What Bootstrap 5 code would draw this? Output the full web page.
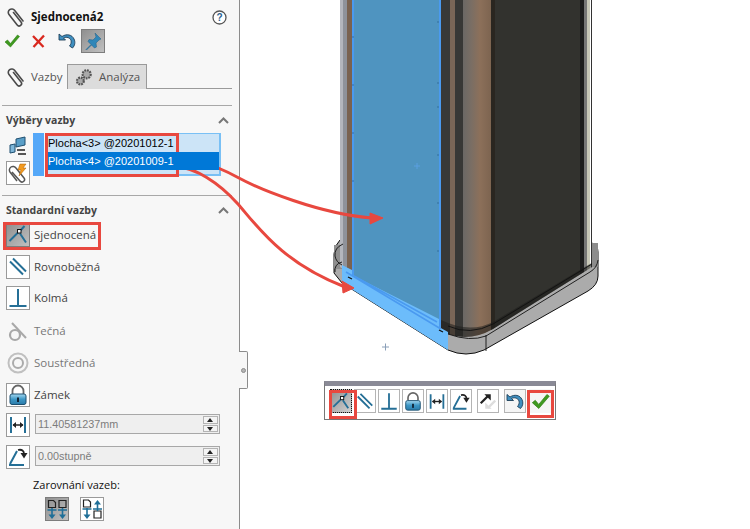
<!DOCTYPE html>
<html lang="cs">
<head>
    <meta charset="UTF-8">
    <meta name="viewport" content="width=device-width, initial-scale=1.0">
    <title>Sjednocená2</title>
    <link rel="stylesheet" href="https://cdn.jsdelivr.net/npm/bootstrap@5.3.1/dist/css/bootstrap.min.css">
    <script src="https://cdn.jsdelivr.net/npm/bootstrap@5.3.1/dist/js/bootstrap.bundle.min.js"></script>
    <style>
        html, body { height: 529px; overflow: hidden; background: #fff; }
        body { font-family: "Open Sans", "Noto Sans", sans-serif; font-size: 11px; color: #333; line-height: 1; }
        .page { position: relative; width: 750px; height: 529px; }
        .side { width: 240px; height: 529px; background: #f7f7f7; border-right: 1px solid #8c8c8c; flex: none; }
        .stage { display: block; width: 510px; height: 529px; }
        .ink { position: absolute; left: 0; top: 0; pointer-events: none; }

        .head { height: 29px; padding: 5px 12px 0 7px; }
        .head-title { font-size: 11.5px; font-weight: 700; color: #111; margin-left: 6px; }
        .acts { height: 24px; padding-left: 3px; margin-bottom: 11px; }
        .act { width: 18px; height: 18px; margin-right: 9px; }
        .tool { width: 24px; height: 24px; padding: 0; border: 1px solid #9a9a9a; background: #fff; border-radius: 0; display: flex; align-items: center; justify-content: center; flex: none; }
        .tool svg { width: 22px; height: 22px; }
        .tool.on { background: linear-gradient(135deg, #8f8f8f, #c0c0c0); border-color: #7d7d7d; }

        .tabs-row { height: 25px; margin-right: 7px; border-bottom: 1px solid #9a9a9a; flex-wrap: nowrap; }
        .tabs-row .nav-link { height: 25px; padding: 0 6px 0 7px; border: 0; border-radius: 0; color: #555; font-size: 11.5px; display: flex; align-items: center; gap: 6px; }
        .tabs-row .tab-a { width: 67px; background: #f7f7f7; }
        .tabs-row .tab-b { width: 80px; background: #dcdcdc; border: 1px solid #9a9a9a; border-bottom: 0; }
        .tab-ico { width: 18px; height: 20px; flex: none; }

        .sect { margin: 16px 7px 0 2px; border-top: 1px solid #a8a8a8; }
        .sect-head { height: 27px; padding: 2px 3px 0 4px; font-size: 10.5px; font-weight: 700; color: #444; }
        .chev { width: 11px; height: 7px; }

        .pick { height: 62px; padding-left: 6px; }
        .pick-ico { width: 24px; padding-top: 3px; }
        .swatch { width: 11px; height: 43px; margin: 0 3px 0 3px; background: #55a8f8; }
        .pick-list { width: 174px; height: 43px; padding: 0; background: #cce4f7; border-style: solid; border-color: #79c0f5; border-width: 1px 2px 2px 1px; border-radius: 0; }
        .pick-list .list-group-item { height: 18px; padding: 0; background: transparent; border: 0; border-radius: 0; color: #000; font-family: "Liberation Sans", sans-serif; font-size: 11px; display: flex; align-items: center; }
        .pick-list .list-group-item.active { background: #0078d7; color: #fff; margin-top: 0; }

        .rel-row { padding-left: 6px; gap: 4px; font-size: 11.5px; color: #444; }
        .rel-row.off { color: #777; }
        .off-ico { width: 24px; height: 24px; flex: none; }
        .gap-8 { margin-bottom: 8px; }
        .gap-7 { margin-bottom: 7px; }
        .gap-6 { margin-bottom: 6px; }
        .gap-9 { margin-bottom: 9px; }

        .num { width: 185px; height: 20px; margin: 0 0 2px 1px; position: relative; }
        .num .form-control { height: 20px; padding: 0 2px; font-family: "Liberation Sans", sans-serif; font-size: 10.8px; color: #7c7c7c; background: #efefef; border: 1px solid #a8a8a8; border-radius: 0; }
        .spin { position: absolute; right: 2px; top: 2px; width: 15px; height: 16px; display: flex; flex-direction: column; gap: 1px; }
        .spin span { flex: 1; background: #f4f4f4; border: 1px solid #b4b4b4; position: relative; }
        .spin span::after { content: ""; position: absolute; left: 3px; top: 1px; border-left: 3px solid transparent; border-right: 3px solid transparent; }
        .spin .up::after { border-bottom: 4px solid #222; }
        .spin .dn::after { border-top: 4px solid #222; }

        .align-label { margin: 10px 0 7px 33px; color: #111; }
        .align-btns { padding-left: 45px; gap: 11px; }

        .grip { position: absolute; left: 239px; top: 351px; width: 9px; height: 38px; background: #f7f7f7; border: 1px solid #8c8c8c; border-left: 0; border-radius: 0 2px 2px 0; display: flex; align-items: center; justify-content: center; }
        .grip i { width: 5px; height: 5px; border-radius: 50%; background: #b5b5b5; border: 1px solid #8c8c8c; }

        .float-bar { position: absolute; left: 324px; top: 381px; width: 232px; height: 39px; background: #fff; border: 1px solid #777; border-top: 5px solid #8a8a96; padding: 3px 0 0 5px; gap: 2px; }
        .float-bar .tool { width: 22px; height: 24px; background: #fff; border: 1px solid #b4b4b4; }
        .float-bar .tool.on { background: linear-gradient(135deg, #8f8f8f, #d0d0d0); border: 1px dotted #111; }
        .float-bar .tool svg { width: 21px; height: 21px; }
        .float-bar .plain { background: #f5f5f5; }
        .float-bar .sep { margin-left: 3px; }
        .float-bar .bare { border: 0; background: #f5f5f5; margin-left: 1px; }
    </style>
</head>
<body>

<svg width="0" height="0" class="position-absolute">
    <defs>
        <linearGradient id="bronze" x1="0" x2="1" y1="0" y2="0"><stop offset="0" stop-color="#6b6865"/><stop offset=".3" stop-color="#7a6e64"/><stop offset=".6" stop-color="#8c705a"/><stop offset="1" stop-color="#7d6450"/></linearGradient>
        <linearGradient id="lockBlue" x1="0" x2="0" y1="0" y2="1"><stop offset="0" stop-color="#a5d8f0"/><stop offset=".5" stop-color="#3d97c6"/><stop offset="1" stop-color="#2a7aa8"/></linearGradient>
    </defs>
    <symbol id="i-clip" viewBox="0 0 18 20"><path d="M6.500 5.500L14 15a2.400 2.400 0 0 1-3.800 3L2 7.500A3.400 3.400 0 0 1 7.500 3.300L16 14" fill="none" stroke="#4a4a4a" stroke-width="1.600" stroke-linecap="round"/></symbol>
    <symbol id="i-check" viewBox="0 0 18 18"><path d="M2 10l2.500-2 3 3.500L14.500 3 16.500 4.500 7.500 15z" fill="#3f9a1f" stroke="#2e7d14" stroke-width=".6"/></symbol>
    <symbol id="i-x" viewBox="0 0 18 18"><path d="M3 4l10.500 11M14 3.500L3.500 15" stroke="#d9281e" stroke-width="2.300" fill="none"/></symbol>
    <symbol id="i-undo" viewBox="0 0 20 20"><path d="M2 3v6h6.500L6.500 7c3-1.500 6.500-.5 7.500 2.500.6 2-.2 4-1.500 5.500l3 2c2.500-2.500 3-6 1.500-9C15 3.500 9.500 2.500 5 5.500z" fill="#3f8fc0" stroke="#1d3e58" stroke-width=".9"/></symbol>
    <symbol id="i-pin" viewBox="0 0 22 22"><path d="M13 3l6 6-2 1-3 3 .5 4-2 1-3-3-5 5-.5-.5 5-5-3-3 1-2 4 .5 3-3z" fill="#2f86b8" stroke="#1f5f86" stroke-width=".5"/></symbol>
    <symbol id="i-coinc" viewBox="0 0 22 22"><path d="M2.500 17L12 7.500M13 9.500l6 9M13 7l4.500-5" stroke="#256f96" stroke-width="2" fill="none"/><rect x="10.500" y="5.500" width="3.500" height="3.500" fill="#fff" stroke="#111"/></symbol>
    <symbol id="i-par" viewBox="0 0 22 22"><path d="M3 5.500l13 13M6 2.500l13 13" stroke="#256f96" stroke-width="2" fill="none"/></symbol>
    <symbol id="i-perp" viewBox="0 0 22 22"><path d="M2.500 19h17M11 2v17" stroke="#256f96" stroke-width="2" fill="none"/></symbol>
    <symbol id="i-tan" viewBox="0 0 24 24"><circle cx="9" cy="16" r="5" fill="none" stroke="#a8a8a8" stroke-width="2.200"/><path d="M6 4l14 15" stroke="#a8a8a8" stroke-width="2"/></symbol>
    <symbol id="i-conc" viewBox="0 0 24 24"><circle cx="12" cy="12" r="9.500" fill="none" stroke="#c0c0c0" stroke-width="2"/><circle cx="12" cy="12" r="5" fill="none" stroke="#ababab" stroke-width="2"/></symbol>
    <symbol id="i-lock" viewBox="0 0 22 22"><path d="M5.500 10V7a5.500 5.500 0 0 1 11 0V10" fill="none" stroke="#666" stroke-width="1.800"/><rect x="3" y="10" width="16" height="10.500" rx="2" fill="url(#lockBlue)" stroke="#1c4f70"/><rect x="10" y="13.500" width="2" height="4.500" fill="#123"/></symbol>
    <symbol id="i-dist" viewBox="0 0 22 22"><path d="M4 3v16M18 3v16" stroke="#256f96" stroke-width="2"/><path d="M6 11h10" stroke="#222" stroke-width="1.500"/><path d="M5.500 11l3.500-3v6zM16.500 11l-3.500-3v6z" fill="#222"/></symbol>
    <symbol id="i-ang" viewBox="0 0 22 22"><path d="M2 19h15M3 18L10 5" stroke="#256f96" stroke-width="2" fill="none"/><path d="M11 4c4-1 6 1 6 4" stroke="#222" stroke-width="1.800" fill="none"/><path d="M13.500 7h7l-3.500 5.500z" fill="#222"/></symbol>
    <symbol id="i-sym" viewBox="0 0 22 22"><path d="M3 13l8-8" stroke="#222" stroke-width="2.500"/><path d="M7 3h7v7z" fill="#222"/><path d="M19 10l-8 8" stroke="#ddd" stroke-width="2.500"/><path d="M8 12v7h7z" fill="#ddd"/></symbol>
    <symbol id="i-al1" viewBox="0 0 22 22"><path d="M2.500 2.500h5l2 2v5h-7zM13 2.500h7v7h-7z" fill="none" stroke="#222" stroke-width="1.200"/><path d="M6 10v7M16.500 10v7M1.500 12h9M12 12h9" stroke="#1f6f98" stroke-width="1.600"/><path d="M2.500 16.500h7L6 21zM13 16.500h7L16.500 21z" fill="#1f6f98"/></symbol>
    <symbol id="i-al2" viewBox="0 0 22 22"><path d="M2.500 2h5l2 2v5h-7zM13 13h7v7h-7z" fill="none" stroke="#222" stroke-width="1.200"/><path d="M6 10v7M16.500 6v7M1.500 11h9M12 11h9" stroke="#1f6f98" stroke-width="1.600"/><path d="M2.500 16.500h7L6 21zM13 6.500h7L16.500 2z" fill="#1f6f98"/></symbol>
    <symbol id="i-chev" viewBox="0 0 11 7"><path d="M1 6l4.500-4.500L10 6" fill="none" stroke="#777" stroke-width="2"/></symbol>
</svg>

<div class="page d-flex">
    <aside class="side">
        <div class="head d-flex align-items-center">
            <svg class="tab-ico"><use href="#i-clip"/></svg>
            <span class="head-title flex-grow-1">Sjednocená2</span>
            <svg width="15" height="15" viewBox="0 0 15 15"><circle cx="7.500" cy="7.500" r="6.500" fill="#fff" stroke="#555" stroke-width="1.300"/><text x="7.500" y="11" text-anchor="middle" font-size="10" font-weight="700" fill="#2a5f8f" font-family="Liberation Sans">?</text></svg>
        </div>
        <div class="acts d-flex align-items-center">
            <svg class="act"><use href="#i-check"/></svg>
            <svg class="act"><use href="#i-x"/></svg>
            <svg class="act me-1" style="width:20px;height:20px"><use href="#i-undo"/></svg>
            <button class="tool on" type="button"><svg><use href="#i-pin"/></svg></button>
        </div>

        <ul class="nav tabs-row">
            <li class="nav-item"><a class="nav-link tab-a" href="#"><svg class="tab-ico"><use href="#i-clip"/></svg>Vazby</a></li>
            <li class="nav-item"><a class="nav-link tab-b" href="#">
                <svg class="tab-ico" viewBox="0 0 20 20"><circle cx="13" cy="7" r="4.500" fill="#aaa" stroke="#555" stroke-width="2.400" stroke-dasharray="2 1"/><circle cx="6" cy="14.500" r="3.800" fill="#aaa" stroke="#555" stroke-width="2.400" stroke-dasharray="2 1"/></svg>Analýza</a></li>
        </ul>

        <section class="sect">
            <div class="sect-head d-flex justify-content-between align-items-center"><span>Výběry vazby</span><svg class="chev"><use href="#i-chev"/></svg></div>
        </section>
        <div class="pick d-flex align-items-start">
            <div class="pick-ico d-flex flex-column align-items-center">
                <svg width="20" height="20" viewBox="0 0 20 20" style="margin-bottom:5px"><path d="M8 3l9-2v8l-9 2z" fill="#5a9fc8" stroke="#1f4f70"/><path d="M2 9l5-1v8l-5 1z" fill="#7fb6d8" stroke="#1f4f70"/><path d="M9 14h8M10 18h8" stroke="#222" stroke-width="1.500"/></svg>
                <button class="tool" type="button"><svg viewBox="0 0 22 22"><path d="M5 10l8 9a2.400 2.400 0 0 0 4-3L9 6a3.500 3.500 0 0 0-6 4l7 9" fill="none" stroke="#555" stroke-width="1.500"/><path d="M13 2h6l-3 4h3l-7 8 2-6h-3z" fill="#f39a1f" stroke="#a85f00" stroke-width=".5"/></svg></button>
            </div>
            <div class="swatch"></div>
            <div class="list-group pick-list">
                <div class="list-group-item">Plocha&lt;3&gt; @20201012-1</div>
                <div class="list-group-item active">Plocha&lt;4&gt; @20201009-1</div>
            </div>
        </div>

        <section class="sect" style="margin-top:0">
            <div class="sect-head d-flex justify-content-between align-items-center"><span>Standardní vazby</span><svg class="chev"><use href="#i-chev"/></svg></div>
        </section>
        <div class="rel-row d-flex align-items-center gap-8"><button class="tool on" type="button"><svg><use href="#i-coinc"/></svg></button>Sjednocená</div>
        <div class="rel-row d-flex align-items-center gap-7"><button class="tool" type="button"><svg><use href="#i-par"/></svg></button>Rovnoběžná</div>
        <div class="rel-row d-flex align-items-center gap-9"><button class="tool" type="button"><svg><use href="#i-perp"/></svg></button>Kolmá</div>
        <div class="rel-row off d-flex align-items-center gap-8"><svg class="off-ico"><use href="#i-tan"/></svg>Tečná</div>
        <div class="rel-row off d-flex align-items-center gap-8"><svg class="off-ico"><use href="#i-conc"/></svg>Soustředná</div>
        <div class="rel-row d-flex align-items-center gap-6"><button class="tool" type="button"><svg><use href="#i-lock"/></svg></button>Zámek</div>
        <div class="rel-row d-flex align-items-center gap-8"><button class="tool" type="button"><svg><use href="#i-dist"/></svg></button>
            <div class="num"><input class="form-control" value="11.40581237mm" disabled><div class="spin"><span class="up"></span><span class="dn"></span></div></div></div>
        <div class="rel-row d-flex align-items-center"><button class="tool" type="button"><svg><use href="#i-ang"/></svg></button>
            <div class="num"><input class="form-control" value="0.00stupně" disabled><div class="spin"><span class="up"></span><span class="dn"></span></div></div></div>
        <div class="align-label">Zarovnání vazeb:</div>
        <div class="align-btns d-flex">
            <button class="tool on" type="button"><svg><use href="#i-al1"/></svg></button>
            <button class="tool" type="button"><svg><use href="#i-al2"/></svg></button>
        </div>
    </aside>

    <svg class="stage" viewBox="240 0 510 529">
        <defs>
            <clipPath id="bodyClip"><path d="M340 0H592V267L493 329Q470 342 448 334L340 267z"/></clipPath>
        </defs>
        <!-- base plate -->
        <path d="M342 283L448 350Q466 358 484 350L588 291Q598 285 598 276V252Q598 246 592 243V262L340 240Q334 246 334 254V273z" fill="#ababab" stroke="#111" stroke-width="1"/>
        <rect x="334" y="245" width="10" height="24" fill="#8f8f8f"/>
        <rect x="586" y="243" width="12" height="24" fill="#8c8c8c"/>
        <g clip-path="url(#bodyClip)">
            <rect x="340" y="0" width="3" height="345" fill="#b4b6bd"/>
            <rect x="343" y="0" width="4" height="345" fill="#8f929a"/>
            <rect x="347" y="0" width="5" height="345" fill="#7a6250"/>
            <rect x="352" y="0" width="87" height="345" fill="#4f94c0"/>
            <rect x="439" y="0" width="2" height="345" fill="#4a9af0"/>
            <rect x="441" y="0" width="9" height="345" fill="#383938"/>
            <rect x="450" y="0" width="5" height="345" fill="#7a6657"/>
            <rect x="455" y="0" width="8" height="345" fill="#383836"/>
            <rect x="463" y="0" width="28" height="345" fill="url(#bronze)"/>
            <rect x="491" y="0" width="4" height="345" fill="#2a2620"/>
            <rect x="495" y="0" width="85" height="345" fill="#32322e"/>
            <rect x="580" y="0" width="4" height="345" fill="#1e1e1e"/>
            <rect x="584" y="0" width="3" height="345" fill="#777"/>
            <rect x="587" y="0" width="3" height="345" fill="#c8c8b8"/>
            <rect x="590" y="0" width="1" height="345" fill="#fff"/>
            <rect x="591" y="0" width="1" height="345" fill="#333"/>
            <path d="M441 320Q470 334 493 322L600 258V345H441z" fill="#1d1d1b" opacity=".55"/>
        </g>
        <rect x="352" y="0" width="2" height="276" fill="#4a9af0"/>
        <path d="M352 37h2M352 85h2M352 133h2M352 181h2M437 22h2M437 83h2M437 107h2M437 155h2M437 203h2M437 251h2" stroke="#2a5f8f" opacity=".7"/>
        <!-- selected edge strip -->
        <path d="M342 265L352 270V275L439 319V327L448 332V350L342 283z" fill="#6cbcfb"/>
        <path d="M354 276L437 322M346 272L441 329" stroke="#4a9af0" stroke-width="1.500" fill="none"/>
        <path d="M348 277l4 2M439 330l4 2" stroke="#111" stroke-width="1.300"/>
        <path d="M448 334Q470 342 486 336L590 272Q597 268 598 260M486 335V351M448 326Q470 336 493 324L592 264" fill="none" stroke="#111" stroke-width=".9"/>
        <path d="M343 244Q334 248 335 256Q336 262 342 265M342 262Q334 264 335 272" fill="none" stroke="#111" stroke-width=".9"/>
        <path d="M414 166h6M417 163v6" stroke="#5b9fe0"/>
        <path d="M382 347h7M385.500 343.500v7" stroke="#8a9fb8"/>
    </svg>

    <div class="grip"><i></i></div>

    <div class="float-bar d-flex align-items-start">
        <button class="tool on" type="button"><svg><use href="#i-coinc"/></svg></button>
        <button class="tool" type="button"><svg><use href="#i-par"/></svg></button>
        <button class="tool" type="button"><svg><use href="#i-perp"/></svg></button>
        <button class="tool" type="button"><svg><use href="#i-lock"/></svg></button>
        <button class="tool" type="button"><svg><use href="#i-dist"/></svg></button>
        <button class="tool" type="button"><svg><use href="#i-ang"/></svg></button>
        <button class="tool sep" type="button"><svg><use href="#i-sym"/></svg></button>
        <button class="tool sep plain" type="button"><svg><use href="#i-undo"/></svg></button>
        <button class="tool bare" type="button"><svg><use href="#i-check"/></svg></button>
    </div>

    <!-- red callouts drawn over the screenshot -->
    <svg class="ink" width="750" height="529" viewBox="0 0 750 529" fill="none" stroke="#e8483f" stroke-width="3">
        <rect x="46.500" y="134.500" width="131" height="41"/>
        <rect x="4.500" y="223.500" width="95" height="25"/>
        <rect x="330.500" y="391.500" width="25" height="26"/>
        <rect x="528.500" y="391.500" width="24" height="25"/>
        <path d="M178 167C195 158 215 165 237 177S320 214 372 218"/>
        <path d="M178 167C195 168 218 182 237 203S280 262 345 287"/>
        <path d="M383 218L370 213V224zM354 288L342 281L343 293z" fill="#e8483f" stroke-width="1"/>
    </svg>
</div>

</body>
</html>
